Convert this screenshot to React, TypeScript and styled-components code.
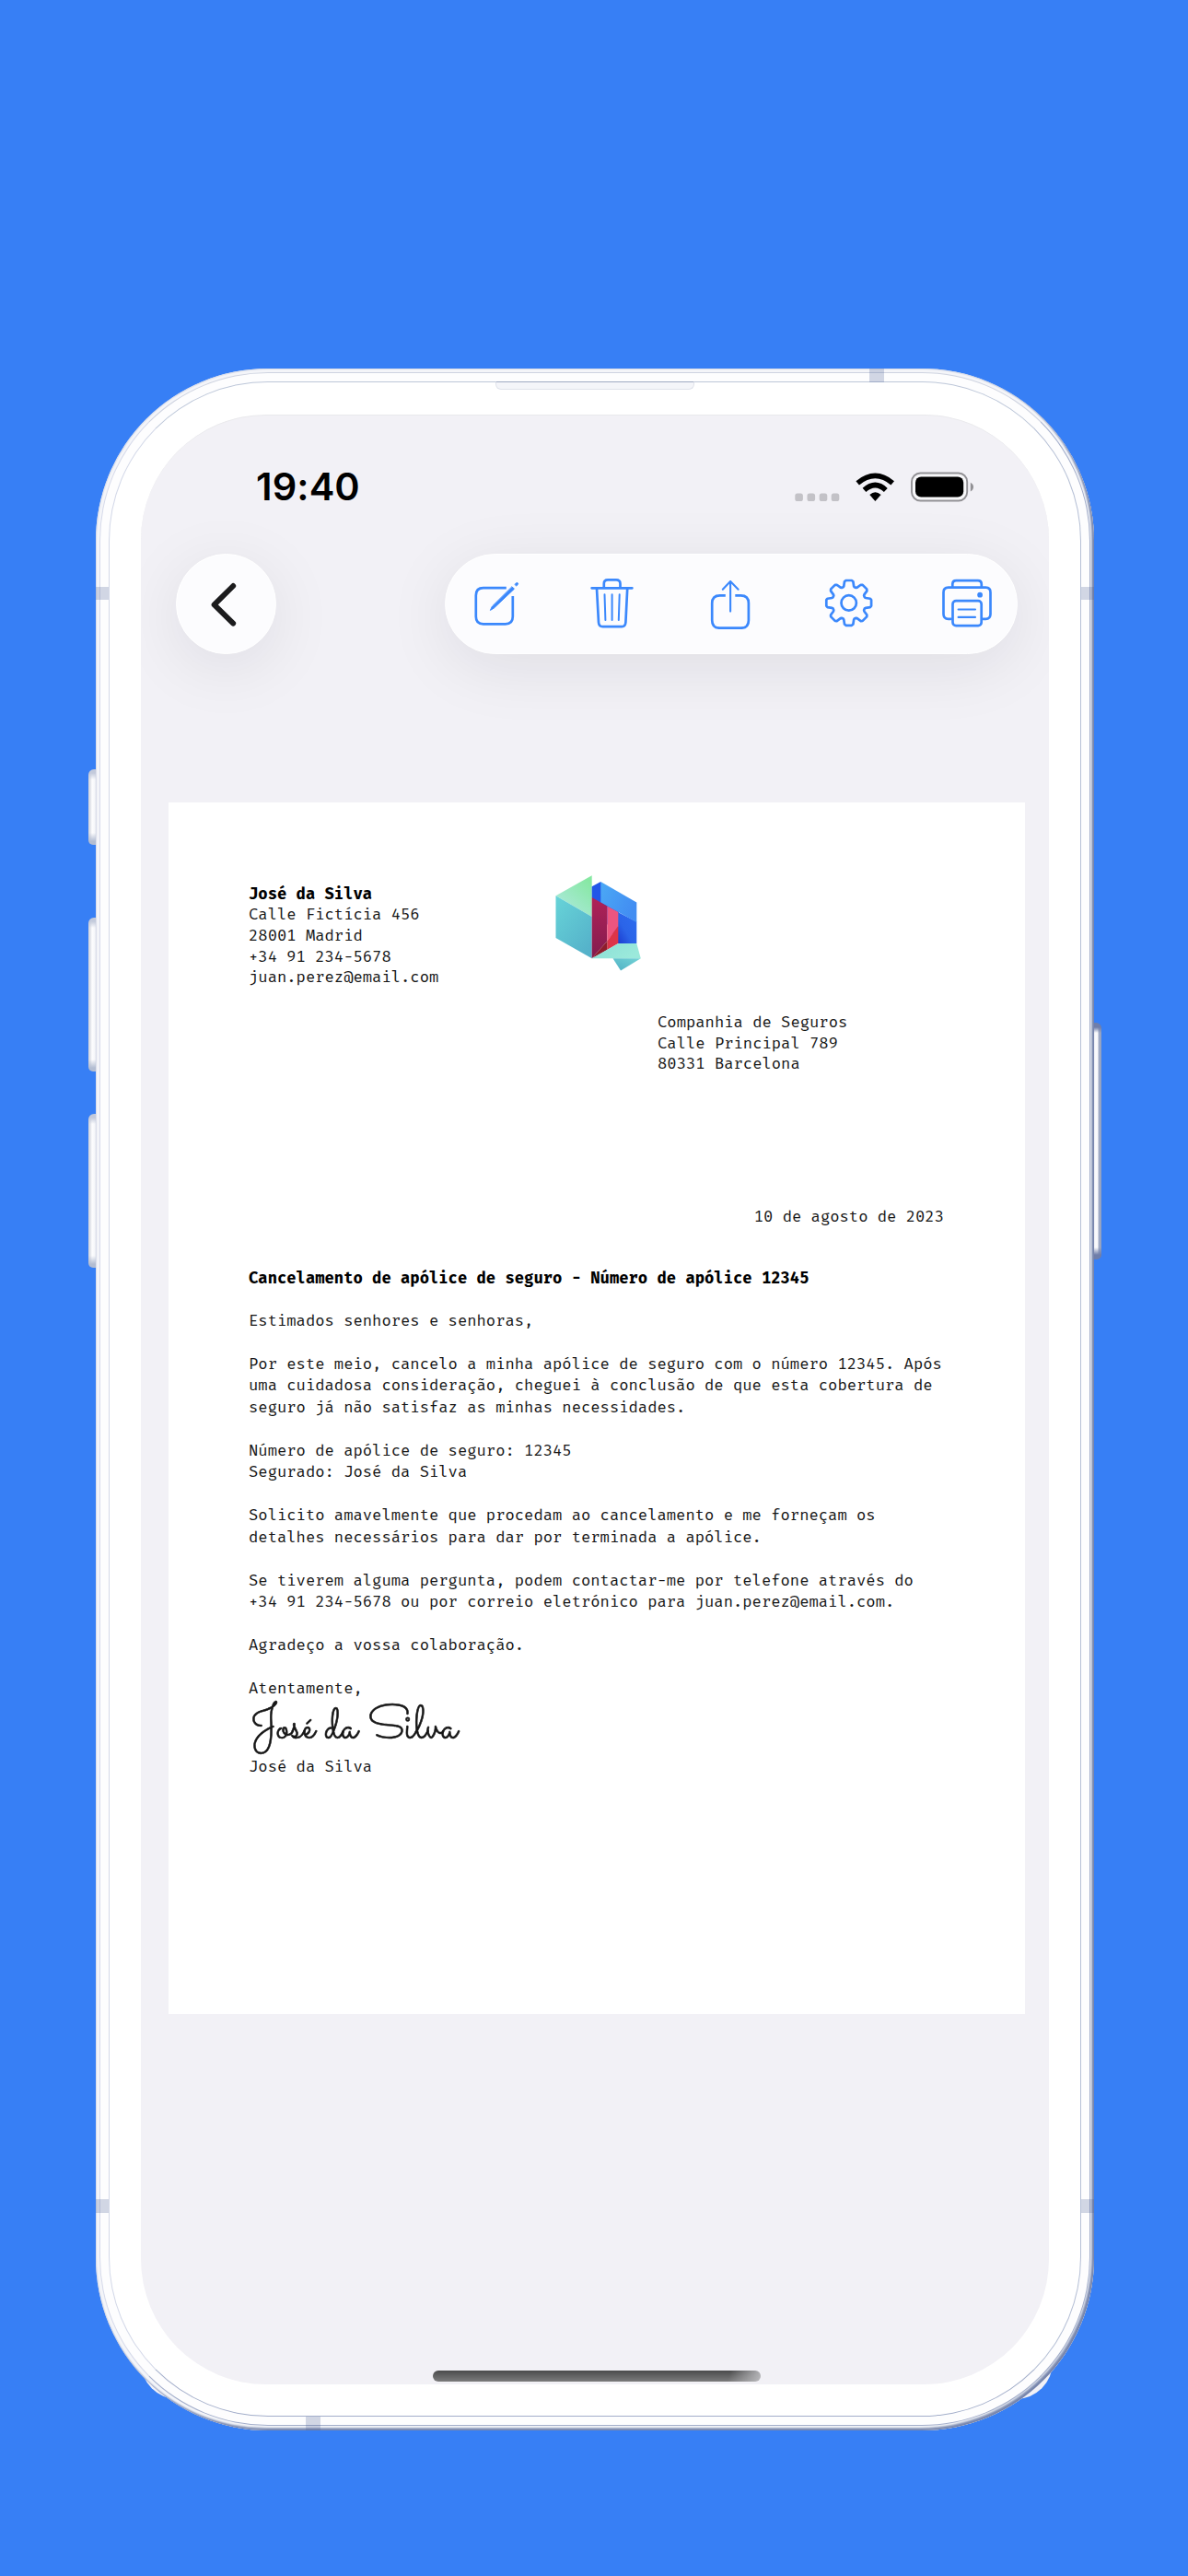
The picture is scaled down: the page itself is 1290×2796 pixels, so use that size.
import React from "react";
import styled, { createGlobalStyle } from "styled-components";

const Global = createGlobalStyle`
  *, *::before, *::after { box-sizing: border-box; }
  body { margin: 0; background: #377ff5; }
  svg { display: block; flex: none; }
`;

const Stage = styled.main`
  position: relative;
  display: grid;
  grid-template-columns: 8px 1084px 8px;
  align-items: start;
  width: 1290px;
  height: 2796px;
  padding: 400px 0 0 96px;
  background: #377ff5;
  overflow: hidden;
`;

const Corner = styled.i<{ $right?: boolean }>`
  position: absolute;
  top: 2505px;
  left: ${(p) => (p.$right ? 1045 : 153)}px;
  width: 98px;
  height: 99px;
  border-radius: ${(p) => (p.$right ? "0 0 40px 0" : "0 0 0 40px")};
  background: #f2f1f6;
`;

const ButtonRail = styled.div<{ $top: number; $right?: boolean }>`
  display: flex;
  flex-direction: column;
  align-items: ${(p) => (p.$right ? "flex-end" : "flex-start")};
  padding-top: ${(p) => p.$top}px;
`;

const SideButton = styled.i<{ $height: number; $gap?: number; $right?: boolean }>`
  flex: none;
  width: 11px;
  height: ${(p) => p.$height}px;
  margin-bottom: ${(p) => p.$gap ?? 0}px;
  border-radius: ${(p) => (p.$right ? "0 6px 5px 0" : "6px 0 0 5px")};
  background: ${(p) =>
    p.$right
      ? "linear-gradient(#6f7eaa 0, #6f7eaa 5px, #6f7eaa00 11px, #6f7eaa00 calc(100% - 13px), #6f7eaa calc(100% - 5px)), linear-gradient(270deg, #8f9dbe 0, #a3aec8 3px, #fbfbfd 4px, #f8f9fc 7px, #cdd3df 9px)"
      : "linear-gradient(#c3cadb 0, #c3cadb 4px, #c3cadb00 11px, #c3cadb00 calc(100% - 13px), #b3bdd2 calc(100% - 4px)), linear-gradient(90deg, #d0d4df 0, #dfe1e8 2px, #fdfdfe 4px, #f5f6fa 7px, #cdd3df 9px)"};
`;

const Frame = styled.div`
  position: relative;
  width: 1084px;
  height: 2238px;
  padding: 4px 4px 5px 4px;
  border-radius: 187px;
  background: #f4f5f9;
  box-shadow: inset -2px -2px 2px #7482aa, inset 0 0 1px 1px #d9dce8, inset -3px -3px 2px #b5bfd3;
`;

const Rail = styled.div`
  height: 100%;
  padding: 9px;
  border: 1px solid;
  border-color: #ced3e0 #a3aecb #a3aecb #d6daea;
  border-radius: 183px;
  background: #fdfdfe;
`;

const Bezel = styled.div`
  height: 100%;
  padding: 35px 34px 34px 34px;
  border: 1px solid;
  border-color: #bdc7d9 #b5bfd5 #a3aeca #d3d8e8;
  border-radius: 173px;
  background: #fff;
`;

const Screen = styled.div`
  display: flex;
  flex-direction: column;
  width: 986px;
  height: 2138px;
  border-radius: 136px;
  background: #f2f1f6;
  border-top: 1px solid #e9e9ec;
  overflow: hidden;
`;

const Band = styled.i<{ $x: number; $y: number; $w: number; $h: number }>`
  position: absolute;
  left: ${(p) => p.$x}px;
  top: ${(p) => p.$y}px;
  width: ${(p) => p.$w}px;
  height: ${(p) => p.$h}px;
  background: rgba(70, 90, 145, 0.24);
`;

const Speaker = styled.i`
  position: absolute;
  left: 434px;
  top: 14px;
  width: 216px;
  height: 9px;
  border-radius: 0 0 6px 6px;
  border: 1px solid #e0e3eb;
  border-top-color: #9fabc2;
  background: #f4f5f9;
`;

const StatusBar = styled.header`
  display: flex;
  justify-content: space-between;
  height: 150px;
  padding: 61px 80px 0 125px;
  flex: none;
`;

const Clock = styled.time`
  margin-top: -9px;
  font: 600 41.5px/50px Inter, "Noto Sans", sans-serif;
  letter-spacing: 0.1px;
  color: #000;
  white-space: nowrap;
`;

const NavBar = styled.nav`
  display: flex;
  justify-content: space-between;
  flex: none;
  height: 270px;
  padding: 0 34px 0 38px;
`;

const Glass = styled.div<{ $width: number }>`
  display: flex;
  align-items: center;
  justify-content: center;
  width: ${(p) => p.$width}px;
  height: 109px;
  border-radius: 55px;
  border: 1px solid #fff;
  background: #fcfcfe;
  box-shadow: 0 14px 70px rgba(20, 20, 30, 0.085);
`;

const Actions = styled(Glass)`
  justify-content: space-between;
  padding: 0 26px 1px;
`;

const Page = styled.article`
  flex: none;
  width: 930px;
  height: 1315px;
  margin-left: 30px;
  padding: 88.8px 88px 0 87px;
  background: #fff;
  color: #161616;
  font: 400 17.2px/22.6px "Fira Mono", "DejaVu Sans Mono", monospace;
`;

const LetterHead = styled.header`
  display: flex;
  height: 139.5px;
`;

const Logo = styled.svg`
  margin-top: -11.8px;
`;

const Sender = styled.address`
  width: 330px;
  font-style: normal;
  white-space: pre;
  strong { color: #000; }
`;

const Recipient = styled.address`
  margin-left: 444px;
  height: 210.5px;
  font-style: normal;
  white-space: pre;
`;

const DateLine = styled.p`
  margin: 0;
  height: 67.4px;
  text-align: right;
`;

const Subject = styled.h1`
  margin: 0;
  height: 44.5px;
  color: #000;
  font: inherit;
  font-weight: 700;
  white-space: nowrap;
`;

const Para = styled.p`
  margin: 0 0 23.5px;
  line-height: 23.5px;
  white-space: pre;
`;

const Closing = styled.p`
  margin: 0;
  line-height: 23.5px;
`;

const Signature = styled.div`
  height: 61.5px;
  padding: 2px 0 0 2px;
  font: 400 50px/58px "Sacramento", "Dancing Script", "Liberation Serif", serif;
  -webkit-text-stroke: 0.6px #161616;
  white-space: nowrap;
`;

const HomeBar = styled.i`
  flex: none;
  width: 356px;
  height: 12px;
  margin: 387px 0 0 317px;
  border-radius: 6px;
  background: linear-gradient(105deg, #b8b8bb00 90%, #b8b8bb), linear-gradient(#4b4b4c, #7b7b7c);
`;

const blue = "#3b88fc";

const StatusGlyphs = () => (
  <svg width="196" height="34" viewBox="863 511.5 196 34">
    <g fill="#c3c2c7">
      {[863.3, 876.5, 889.7, 902.7].map((x) => (
        <rect key={x} x={x} y="535" width="8.6" height="8.6" rx="2.6" />
      ))}
    </g>
    <g fill="none" stroke="#000" strokeWidth="5.6">
      <path d="M931.2 523.8Q950.5 508 969.2 523.8" />
      <path d="M938.5 531.4Q950.5 520.5 961.8 531.4" />
    </g>
    <path d="M944.3 536.6Q950.4 531 956.6 536.6L950.4 543.4Z" />
    <rect x="990" y="513" width="60.2" height="30" rx="9.5" fill="#f8f8fa" stroke="#929195" strokeWidth="1.9" />
    <rect x="994" y="517" width="52.2" height="22" rx="6.2" />
    <path d="M1053.8 523.2Q1057 524.8 1057 528.1T1053.8 533Z" fill="#929195" />
  </svg>
);

const icon = { fill: "none", stroke: blue, strokeWidth: 2.7, strokeLinecap: "round", strokeLinejoin: "round" } as const;

const EditIcon = () => (
  <svg width="56" height="56" viewBox="510 628 56 56" {...icon}>
    <path d="M549.8 639.2H524.8Q516.8 639.2 516.8 647.2V670.3Q516.8 678.4 524.8 678.4H548.8Q556.8 678.4 556.8 670.3V648" strokeLinecap="butt" />
    <path d="M556.2 638L558.4 640.2L536.4 661L532.4 663.4L534.3 659.4Z" fill={blue} strokeWidth="1" />
    <path d="M559.2 635.2L560.8 633.6Q562.4 633.2 562.6 634.8L561 636.8Z" fill={blue} strokeWidth="1" />
  </svg>
);

const TrashIcon = () => (
  <svg width="56" height="56" viewBox="638 628 56 56" {...icon}>
    <path d="M642.6 639.3H686.4M655.8 639V634.5Q655.8 630.3 660 630.3H669Q673.5 630.3 673.5 634.5V639M648 640L650 676.5Q650.3 681.2 654.5 681.2H675.2Q679 681.2 679.4 676.5L681.2 640" />
    <path d="M656.5 646.3L657.4 674M664.6 646.3V674M672.7 646.3L671.8 674" strokeWidth="2" />
  </svg>
);

const ShareIcon = () => (
  <svg width="56" height="56" viewBox="766 628 56 56" {...icon}>
    <path d="M787.8 647.3H781.7Q773.2 647.3 773.2 655.8V674.2Q773.2 682.7 781.7 682.7H804.4Q812.9 682.7 812.9 674.2V655.8Q812.9 647.3 804.4 647.3H798.3" strokeLinecap="butt" />
    <path d="M793.1 664.6V632M784.8 640.7L793.1 632L801.6 640.7" strokeWidth="2.1" />
  </svg>
);

const tooth = [[-0.34, 18.2], [-0.29, 19], [-0.2, 23.6], [-0.13, 24.6], [0.13, 24.6], [0.2, 23.6], [0.29, 19], [0.34, 18.2]];

const gearPoints = Array.from({ length: 8 }, (_, i) =>
  tooth
    .map(([da, r]) => {
      const a = (i * Math.PI) / 4 - Math.PI / 2 + da;
      return `${(921.7 + r * Math.cos(a)).toFixed(2)},${(655.4 + r * Math.sin(a)).toFixed(2)}`;
    })
    .join(" "),
).join(" ");

const GearIcon = () => (
  <svg width="56" height="56" viewBox="894 628 56 56" {...icon}>
    <polygon points={gearPoints} />
    <circle cx="921.7" cy="655.4" r="8.2" />
  </svg>
);

const PrinterIcon = () => (
  <svg width="56" height="56" viewBox="1022 628 56 56" {...icon}>
    <path d="M1034.3 638.5V635.2Q1034.3 631.2 1038.3 631.2H1061.8Q1065.8 631.2 1065.8 635.2V638.5M1032.5 672.8H1029.8Q1024.5 672.8 1024.5 667.5V644Q1024.5 638.7 1029.8 638.7H1070.3Q1075.5 638.7 1075.5 644V667.5Q1075.5 672.8 1070.3 672.8H1067.5" />
    <rect x="1034.5" y="653.2" width="31.2" height="27" rx="3.6" />
    <path d="M1040.6 662.5H1059M1040.6 670.9H1059" strokeWidth="2.1" />
    <circle cx="1064.1" cy="646.7" r="2.9" fill={blue} stroke="none" />
  </svg>
);

const LogoMark = () => (
  <Logo width="100" height="110" viewBox="40 28 100 110">
    <defs>
      <linearGradient id="mint" x1="0" y1="1" x2=".8" y2="0"><stop stopColor="#b3e9e6" /><stop offset="1" stopColor="#86e8a2" /></linearGradient>
      <linearGradient id="teal" x1="0" y1="0" x2=".7" y2="1"><stop stopColor="#67d4d8" /><stop offset="1" stopColor="#55b2ca" /></linearGradient>
      <linearGradient id="wine" x1="0" y1="0" x2="0" y2="1"><stop stopColor="#b02258" /><stop offset="1" stopColor="#821b4e" /></linearGradient>
      <linearGradient id="sky" x1="0" y1="0" x2="1" y2=".5"><stop stopColor="#4ba9f5" /><stop offset="1" stopColor="#428df2" /></linearGradient>
      <linearGradient id="royal" x1="0" y1="1" x2="1" y2="0"><stop stopColor="#1b3bd0" /><stop offset=".4" stopColor="#2b64e8" /><stop offset="1" stopColor="#2d6df0" /></linearGradient>
      <linearGradient id="foot" x1="0" y1="0" x2="1" y2=".4"><stop stopColor="#58b6c3" /><stop offset=".4" stopColor="#91e3d8" /><stop offset="1" stopColor="#9be9db" /></linearGradient>
      <linearGradient id="tip" x1="0" y1="1" x2="1" y2="0"><stop stopColor="#4fb0c4" /><stop offset="1" stopColor="#74d3d6" /></linearGradient>
    </defs>
    <path d="M43.5 52.3L82.7 30.3V75Z" fill="url(#mint)" />
    <path d="M43.5 52.3L82.7 75V120.3L43.5 98Z" fill="url(#teal)" />
    <path d="M82.7 42.3L92.3 37L104 62L112 70L111.3 104L82.7 54Z" fill="#2256e8" />
    <path d="M111 70L131.3 80.5V104H111Z" fill="url(#royal)" />
    <path d="M92.3 37L131.3 59.5V81L92.3 59.6Z" fill="url(#sky)" />
    <path d="M82.7 54L99.3 63.5V101.5L82.7 120.3Z" fill="url(#wine)" />
    <path d="M99.3 63.5L111.3 70V86L99.3 101.5Z" fill="#ed557f" />
    <path d="M111.3 85V104L99.3 111V101.5Z" fill="#dd3449" />
    <path d="M82.7 120.3L99.3 101.5V111Z" fill="#8e1d2d" />
    <path d="M82.7 120.3L111.3 104H131.3L135.8 120.3Z" fill="url(#foot)" />
    <path d="M105.5 120.3H135.8L114 133.5Z" fill="url(#tip)" />
  </Logo>
);

const App = () => (
  <>
    <Global />
    <Stage>
      <Corner />
      <Corner $right />
      <ButtonRail $top={434.5}>
        <SideButton $height={82.5} $gap={79} />
        <SideButton $height={166.5} $gap={46.5} />
        <SideButton $height={166.5} />
      </ButtonRail>
      <Frame>
        <Rail>
          <Bezel>
            <Screen>
              <StatusBar>
                <Clock>19:40</Clock>
                <StatusGlyphs />
              </StatusBar>
              <NavBar>
                <Glass $width={109}>
                  <svg width="36" height="54" viewBox="0 0 36 54" fill="none" stroke="#1c1c1e" strokeWidth="5.9" strokeLinecap="round" strokeLinejoin="round">
                    <path d="M25.2 7L4.6 27.4L25.2 47.6" />
                  </svg>
                </Glass>
                <Actions $width={622}>
                  <EditIcon />
                  <TrashIcon />
                  <ShareIcon />
                  <GearIcon />
                  <PrinterIcon />
                </Actions>
              </NavBar>
              <Page>
                <LetterHead>
                  <Sender>
                    <strong>José da Silva</strong>
                    {"\nCalle Fictícia 456\n28001 Madrid\n+34 91 234-5678\njuan.perez@email.com"}
                  </Sender>
                  <LogoMark />
                </LetterHead>
                <Recipient>{"Companhia de Seguros\nCalle Principal 789\n80331 Barcelona"}</Recipient>
                <DateLine>10 de agosto de 2023</DateLine>
                <Subject>Cancelamento de apólice de seguro - Número de apólice 12345</Subject>
                <Para>Estimados senhores e senhoras,</Para>
                <Para>{"Por este meio, cancelo a minha apólice de seguro com o número 12345. Após\numa cuidadosa consideração, cheguei à conclusão de que esta cobertura de\nseguro já não satisfaz as minhas necessidades."}</Para>
                <Para>{"Número de apólice de seguro: 12345\nSegurado: José da Silva"}</Para>
                <Para>{"Solicito amavelmente que procedam ao cancelamento e me forneçam os\ndetalhes necessários para dar por terminada a apólice."}</Para>
                <Para>{"Se tiverem alguma pergunta, podem contactar-me por telefone através do\n+34 91 234-5678 ou por correio eletrónico para juan.perez@email.com."}</Para>
                <Para>Agradeço a vossa colaboração.</Para>
                <Closing>Atentamente,</Closing>
                <Signature>José da Silva</Signature>
                <Closing>José da Silva</Closing>
              </Page>
              <HomeBar />
            </Screen>
          </Bezel>
        </Rail>
        <Speaker />
        <Band $x={840} $y={0} $w={16} $h={15} />
        <Band $x={0} $y={237} $w={14} $h={14} />
        <Band $x={1070} $y={237} $w={14} $h={14} />
        <Band $x={0} $y={1987} $w={14} $h={15} />
        <Band $x={1070} $y={1987} $w={14} $h={15} />
        <Band $x={228} $y={2223} $w={16} $h={15} />
      </Frame>
      <ButtonRail $top={710} $right>
        <SideButton $height={257} $right />
      </ButtonRail>
    </Stage>
  </>
);

export default App;
